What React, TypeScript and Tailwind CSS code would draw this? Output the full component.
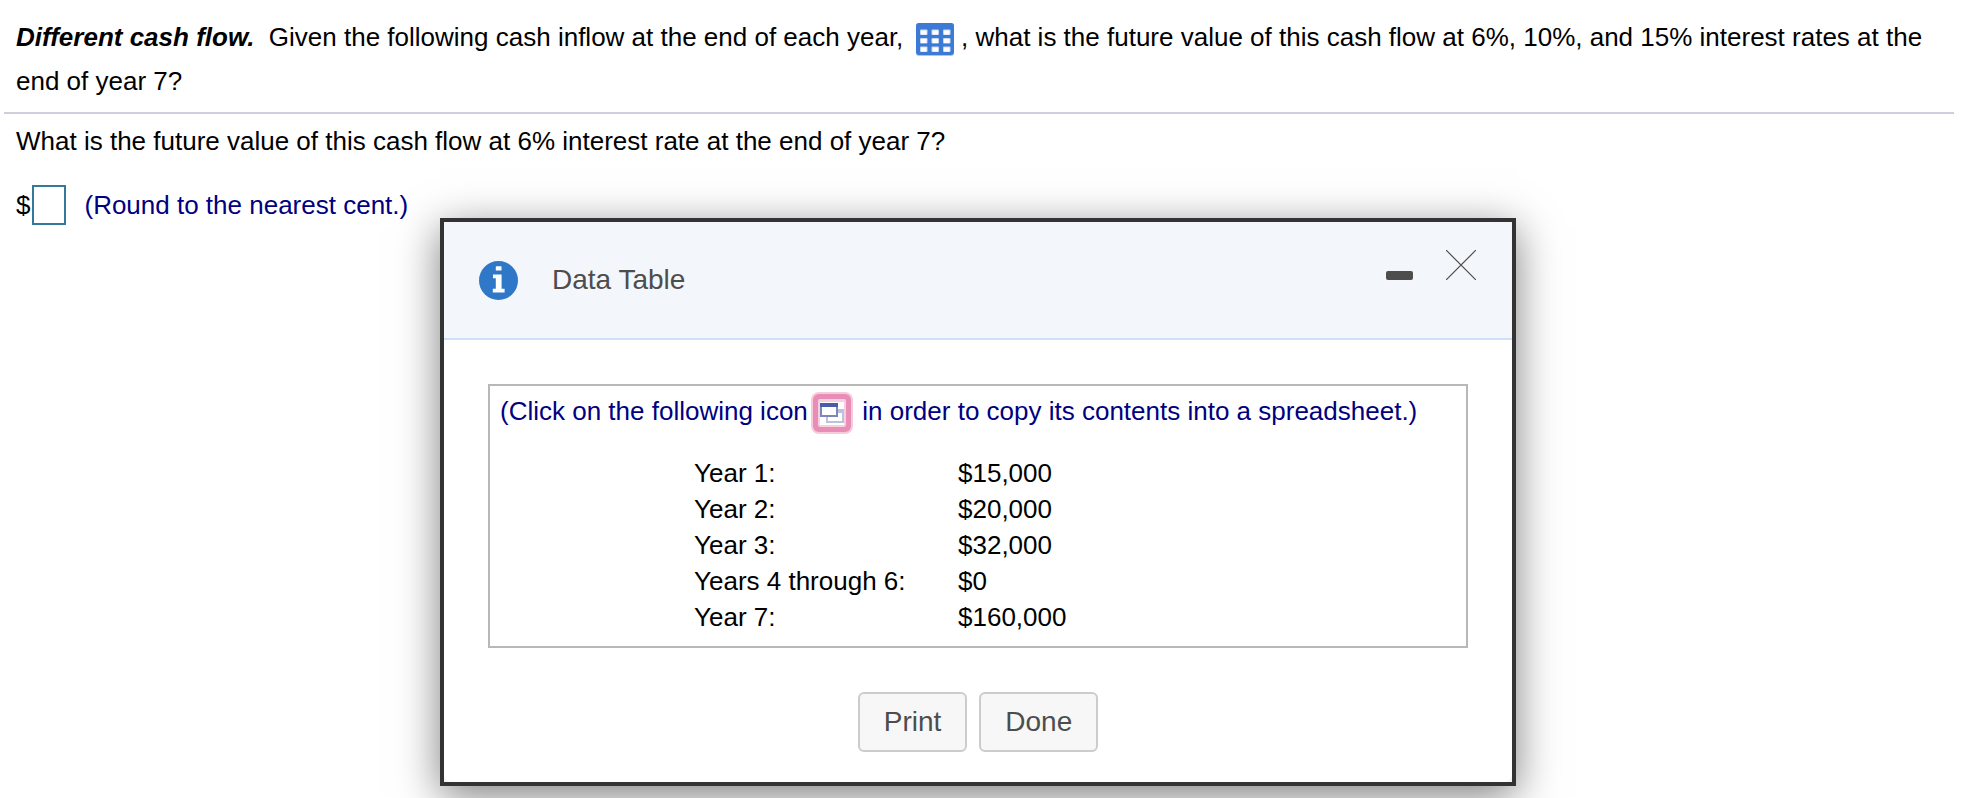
const cashFlows = [
	{ period: "Year 1:", amount: "$15,000" },
	{ period: "Year 2:", amount: "$20,000" },
	{ period: "Year 3:", amount: "$32,000" },
	{ period: "Years 4 through 6:", amount: "$0" },
	{ period: "Year 7:", amount: "$160,000" },
];

const InfoIcon = () => (
	<svg viewBox="0 0 39 39" className="size-[39px]" aria-hidden="true">
		<circle cx="19.5" cy="19.5" r="19.5" fill="#2f78c8" />
		<rect x="16.8" y="5.3" width="5.7" height="4.2" rx="0.5" fill="#fff" />
		<path d="M14 13.5h8.6v14.3h3v3.7H13.8v-3.7h3V17.2H14z" fill="#fff" />
	</svg>
);

const GridIcon = () => (
	<svg viewBox="0 0 38 33" className="h-[33px] w-[38px]" aria-hidden="true">
		<rect width="38" height="33" rx="3" fill="#a9c6f1" />
		<rect width="38" height="32" rx="3" fill="#3d7ad6" />
		{[6.5, 15, 23.5].map((y) =>
			[4, 15.5, 27].map((x) => (
				<g key={`${x}-${y}`}>
					<rect x={x} y={y} width="7.5" height="5.5" rx="1" fill="#c5d8f5" />
					<rect x={x + 1} y={y + 1} width="5.5" height="4" fill="#fff" />
				</g>
			)),
		)}
	</svg>
);

const CopyIcon = () => (
	<svg viewBox="0 0 42 42" className="size-[42px]" aria-hidden="true">
		<rect width="42" height="42" rx="8" fill="#f6c9dc" />
		<rect x="2" y="2" width="38" height="38" rx="6" fill="#e88db6" />
		<rect x="7" y="7" width="28" height="28" rx="2" fill="#f6cfe0" />
		<rect x="9" y="10" width="24" height="23" fill="#fff" />
		<rect x="16" y="18" width="16" height="12" fill="#fff" stroke="#bcc2de" strokeWidth="2" />
		<rect x="27" y="17" width="6" height="4" fill="#bcc2de" />
		<rect x="10" y="12" width="16" height="12" fill="#fff" stroke="#7f86bb" strokeWidth="2" />
		<rect x="9" y="11" width="18" height="4" fill="#4d5ca6" />
	</svg>
);

const DataTableDialog = () => (
	<div className="absolute inset-x-0 top-[218px] flex justify-center pr-2">
		<div
			role="dialog"
			aria-labelledby="dialog-title"
			className="w-full max-w-[1076px] border-4 border-[#333333] bg-[#f3f6fb] shadow-[0_10px_40px_rgba(0,0,0,0.5)]">
			<div className="flex items-start justify-between border-b-2 border-[#cce0f7] pr-8 pl-[35px]">
				<div className="flex h-[116px] items-center gap-[34px]">
					<InfoIcon />
					<h2 id="dialog-title" className="text-[28px] text-[#4d4d4d]">
						Data Table
					</h2>
				</div>
				<div className="flex items-end gap-[25px] pt-6">
					<button type="button" aria-label="Minimize" className="p-1">
						<span className="block h-[9px] w-[27px] rounded-xs bg-[#4d4d4d]" />
					</button>
					<button type="button" aria-label="Close" className="p-1">
						<svg viewBox="0 0 30 30" className="size-[30px]" aria-hidden="true">
							<path d="M0 0L30 30M30 0L0 30" stroke="#4d4d4d" strokeWidth="1.2" />
						</svg>
					</button>
				</div>
			</div>
			<div className="rounded-b-lg bg-white px-11 pt-11 pb-[30px]">
				<div className="border-2 border-[#b8b8b8] px-2.5 pt-1 pb-[11px]">
					<p className="leading-[42px] text-[#000080]">
						(Click on the following icon{" "}
						<button
							type="button"
							aria-label="Copy to spreadsheet"
							className="mr-0.5 -ml-1 align-middle">
							<CopyIcon />
						</button>
						{"\u00a0"}in order to copy its contents into a spreadsheet.)
					</p>
					<table className="mt-[21px] ml-[194px] leading-9">
						<tbody>
							{cashFlows.map(({ period, amount }) => (
								<tr key={period}>
									<th scope="row" className="w-[264px] p-0 text-left font-normal">
										{period}
									</th>
									<td className="p-0">{amount}</td>
								</tr>
							))}
						</tbody>
					</table>
				</div>
				<div className="mt-11 flex justify-center gap-3 text-[28px] text-[#4d4d4d]">
					<button
						type="button"
						className="h-[60px] rounded-md border-2 border-[#cccccc] bg-[#f7f7f7] px-6">
						Print
					</button>
					<button
						type="button"
						className="h-[60px] rounded-md border-2 border-[#cccccc] bg-[#f7f7f7] px-6">
						Done
					</button>
				</div>
			</div>
		</div>
	</div>
);

const App = () => {
	return (
		<div className="relative min-h-screen bg-white pr-2.5 pl-1 font-['Liberation_Sans',Arial,sans-serif] text-[26px] text-black">
			<p className="border-b-2 border-[#cdd0dc] px-3 pt-[15px] pb-[9px] leading-[44px]">
				<strong className="italic">Different cash flow.</strong>
				{"\u00a0 "}Given the following cash inflow at the end of each year,{"\u00a0 "}
				<button
					type="button"
					aria-label="Open data table"
					className="-ml-0.5 h-[33px] align-middle">
					<GridIcon />
				</button>
				{"\u00a0"}, what is the future value of this cash flow at 6%, 10%, and 15% interest
				rates at the end of year 7?
			</p>
			<div className="px-3 pt-[5px]">
				<p className="leading-[44px]">
					What is the future value of this cash flow at 6% interest rate at the end of year 7?
				</p>
				<div className="mt-5 flex items-center leading-[44px]">
					<label htmlFor="answer">$</label>
					<input
						id="answer"
						type="text"
						className="mr-[18px] ml-0.5 h-10 w-[34px] border-2 border-[#35789a] bg-white outline-none"
					/>
					<span className="text-[#000080]">(Round to the nearest cent.)</span>
				</div>
			</div>
			<DataTableDialog />
		</div>
	);
};

export default App;
